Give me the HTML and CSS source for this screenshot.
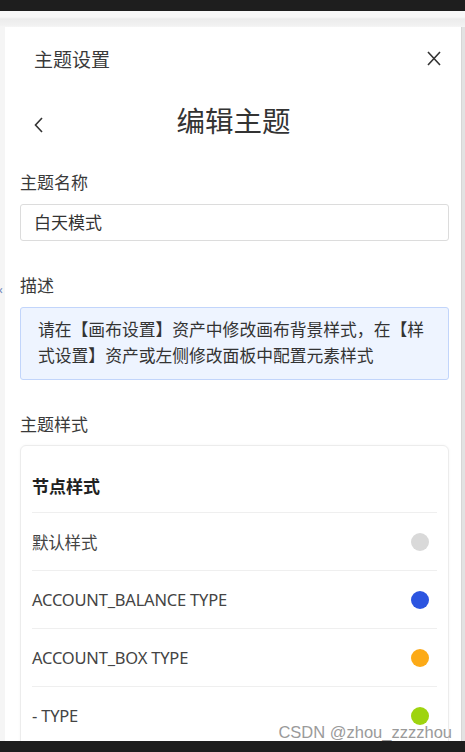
FILE: index.html
```html
<!DOCTYPE html>
<html lang="zh">
<head>
<meta charset="utf-8">
<link rel="stylesheet" href="styles.css">
</head>
<body>
<div class="screen">
  <div class="topbar"></div>
  <div class="stage">
    <div class="left-edge"><span class="edge-mark">‹</span></div>
    <div class="panel">
      <div class="panel-head">
        <span class="panel-title">主题设置</span>
        <svg class="close" width="14" height="15" viewBox="0 0 14 15"><path d="M1 1L13 14M13 1L1 14" stroke="#333" stroke-width="1.6" fill="none"/></svg>
      </div>
      <div class="sub-head">
        <svg class="back" width="12" height="18" viewBox="0 0 12 18"><path d="M9 2L2.5 9L9 16" stroke="#333" stroke-width="1.6" fill="none"/></svg>
        <span class="sub-title">编辑主题</span>
      </div>
      <div class="body">
        <div class="label">主题名称</div>
        <div class="input">白天模式</div>
        <div class="label label-desc">描述</div>
        <div class="desc">请在【画布设置】资产中修改画布背景样式，在【样式设置】资产或左侧修改面板中配置元素样式</div>
        <div class="label label-style">主题样式</div>
        <div class="card">
          <div class="card-title">节点样式</div>
          <div class="row"><span>默认样式</span><i class="dot dot-gray"></i></div>
          <div class="row"><span>ACCOUNT_BALANCE TYPE</span><i class="dot dot-blue"></i></div>
          <div class="row"><span>ACCOUNT_BOX TYPE</span><i class="dot dot-orange"></i></div>
          <div class="row"><span>- TYPE</span><i class="dot dot-green"></i></div>
        </div>
      </div>
      <div class="watermark">CSDN @zhou_zzzzhou</div>
    </div>
    <div class="right-edge"><div class="scroll-thumb"></div></div>
  </div>
  <div class="bottombar"></div>
</div>
</body>
</html>
```
FILE: styles.css
```css
html, body {
  margin: 0;
  padding: 0;
}
body {
  font-family: "Noto Sans", "Noto Sans CJK SC", sans-serif;
  color: #333;
}
.screen {
  width: 465px;
  height: 752px;
  display: flex;
  flex-direction: column;
  overflow: hidden;
  background: #f4f4f4;
}
.topbar {
  height: 11px;
  background: #1e1e1e;
  flex: none;
}
.bottombar {
  height: 11px;
  background: #1e1e1e;
  flex: none;
}
.stage {
  flex: 1;
  display: flex;
  padding-top: 16px;
  background: linear-gradient(#f8f8f8 0, #f8f8f8 6px, #ececec 8px, #f1f1f1 14px, #f6f6f6 16px, #f6f6f6 100%);
  min-height: 0;
}
.left-edge {
  width: 5px;
  flex: none;
  position: relative;
  background: #f5f5f5;
}
.edge-mark {
  position: absolute;
  left: -1px;
  top: 257px;
  font-size: 12px;
  color: #6f83b8;
  line-height: 12px;
}
.right-edge {
  width: 3px;
  flex: none;
  background: #e2e2e2;
  border-left: 1px solid #d6d6d6;
}
.panel {
  flex: 1;
  background: #fff;
  position: relative;
  overflow: hidden;
  min-width: 0;
}
.panel-head {
  display: flex;
  align-items: center;
  justify-content: space-between;
  padding: 21px 20px 0 29px;
  height: 24px;
}
.panel-title {
  font-size: 19px;
  line-height: 24px;
  color: #3a3a3a;
}
.close {
  display: block;
  margin-top: -4px;
}
.sub-head {
  position: relative;
  height: 36px;
  margin-top: 31px;
  display: flex;
  align-items: center;
  justify-content: center;
}
.back {
  position: absolute;
  left: 28px;
  top: 13px;
}
.sub-title {
  font-size: 28.5px;
  line-height: 36px;
  color: #333;
  padding-left: 1px;
}
.body {
  padding: 0 12px 0 15px;
}
.label {
  font-size: 17px;
  line-height: 24px;
  color: #3a3a3a;
  margin-top: 32px;
}
.label-desc {
  margin-top: 33px;
}
.label-style {
  margin-top: 33px;
}
.input {
  margin-top: 9px;
  height: 37px;
  box-sizing: border-box;
  border: 1px solid #dcdcdc;
  border-radius: 3px;
  padding-left: 13px;
  font-size: 17px;
  line-height: 35px;
  color: #333;
}
.desc {
  margin-top: 9px;
  height: 73px;
  box-sizing: border-box;
  background: #eef4ff;
  border: 1px solid #c2d5fb;
  border-radius: 3px;
  padding: 9px 10px 0 17px;
  font-size: 16.8px;
  line-height: 26px;
  color: #333;
}
.card {
  margin-top: 8px;
  border: 1px solid #ececec;
  border-radius: 6px;
  box-shadow: 0 0 3px rgba(0,0,0,0.04);
  padding: 0 11px 0 11px;
  height: 400px;
}
.card-title {
  font-weight: 700;
  font-size: 17px;
  line-height: 24px;
  color: #222;
  padding: 29px 0 13px;
  border-bottom: 1px solid #efefef;
}
.row {
  display: flex;
  align-items: center;
  justify-content: space-between;
  height: 58px;
  box-sizing: border-box;
  border-bottom: 1px solid #efefef;
  font-size: 16.5px;
  color: #444;
  letter-spacing: -0.2px;
}
.dot {
  display: block;
  width: 18px;
  height: 18px;
  border-radius: 50%;
  margin-right: 8px;
}
.dot-gray { background: #d9d9d9; }
.dot-blue { background: #2c55e0; }
.dot-orange { background: #fcaa17; }
.dot-green { background: #9ed40f; }
.watermark {
  position: absolute;
  right: 9px;
  bottom: -2px;
  font-family: "Liberation Sans", "Noto Sans", sans-serif;
  font-size: 16.5px;
  line-height: 22px;
  color: #9a9a9a;
  text-shadow: 0 0 2px #fff;
}
```
